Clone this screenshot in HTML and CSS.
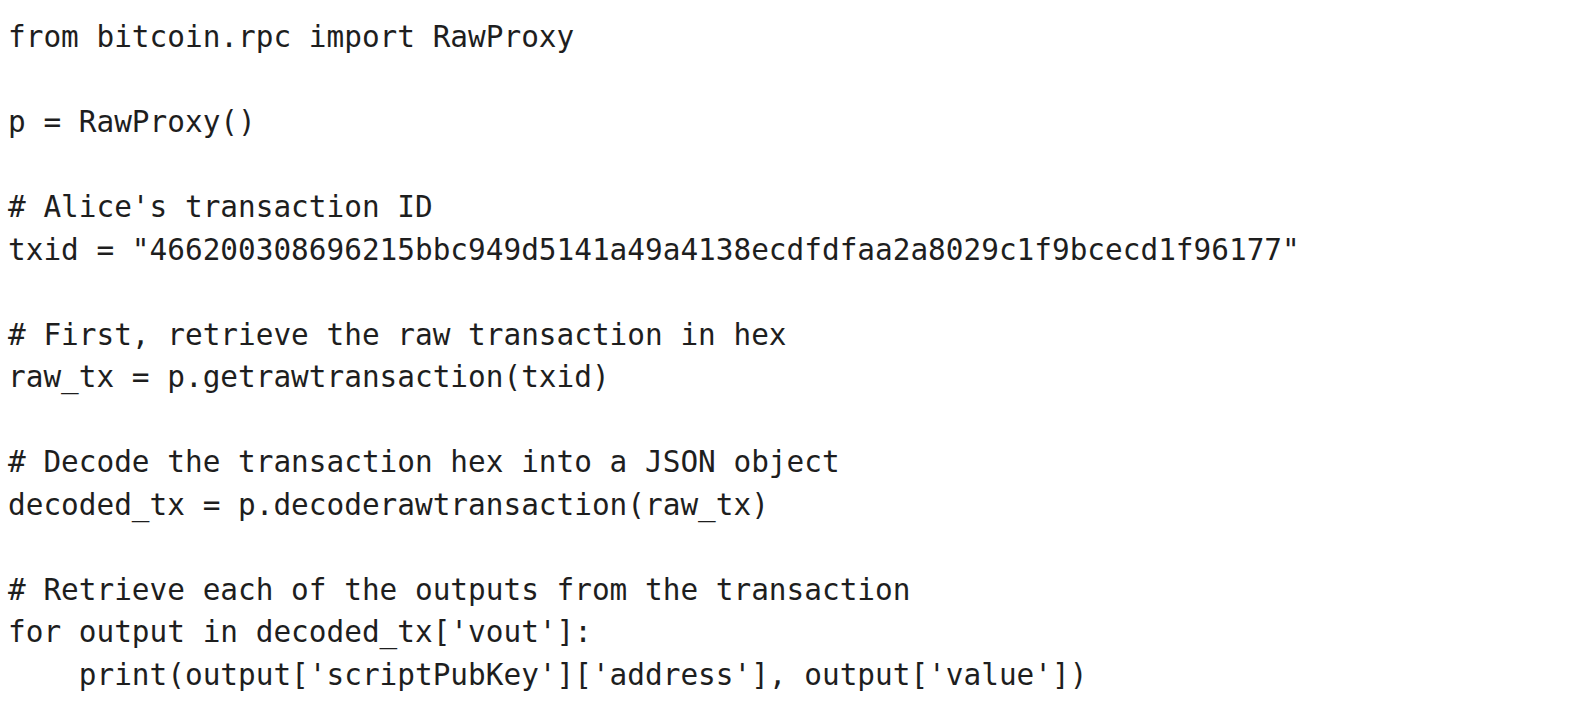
FILE: index.html
```html
<!DOCTYPE html>
<html>
<head>
<meta charset="utf-8">
<link rel="stylesheet" href="styles.css">
</head>
<body>
<pre class="code">from bitcoin.rpc import RawProxy

p = RawProxy()

# Alice's transaction ID
txid = "466200308696215bbc949d5141a49a4138ecdfdfaa2a8029c1f9bcecd1f96177"

# First, retrieve the raw transaction in hex
raw_tx = p.getrawtransaction(txid)

# Decode the transaction hex into a JSON object
decoded_tx = p.decoderawtransaction(raw_tx)

# Retrieve each of the outputs from the transaction
for output in decoded_tx['vout']:
    print(output['scriptPubKey']['address'], output['value'])</pre>
</body>
</html>
```
FILE: styles.css
```css
html, body {
  margin: 0;
  padding: 0;
  background: #ffffff;
}
.code {
  margin: 0;
  padding: 16px 0 0 8px;
  font-family: "DejaVu Sans Mono", monospace;
  font-size: 29.4px;
  line-height: 42.5px;
  color: #1e1e1e;
}
```
